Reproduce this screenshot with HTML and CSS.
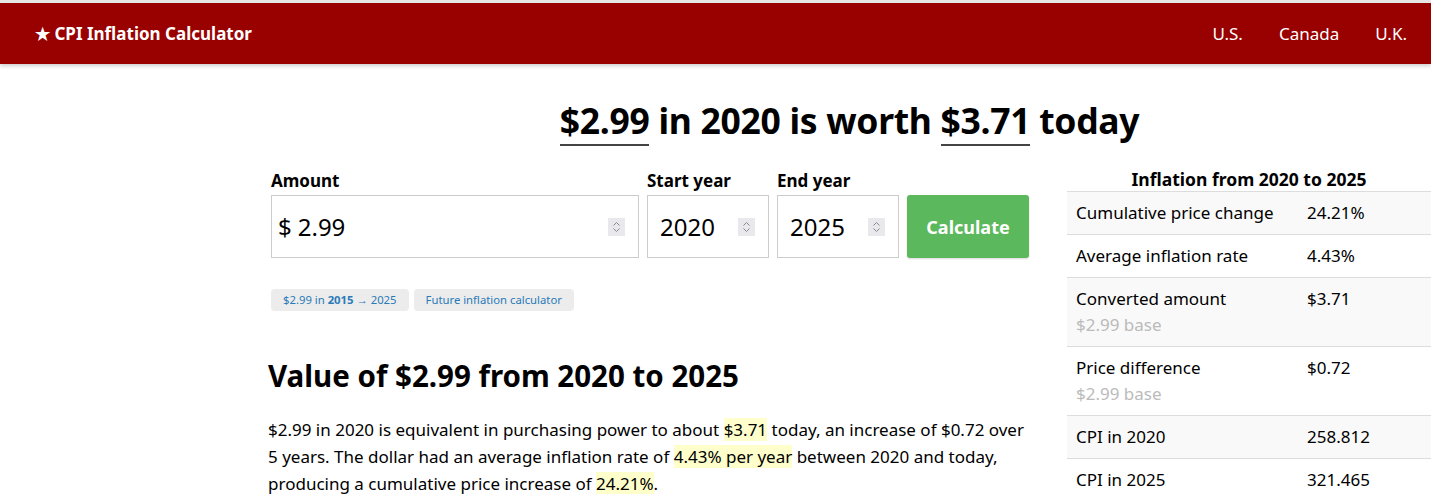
FILE: index.html
```html
<!DOCTYPE html>
<html lang="en">
<head>
    <meta charset="UTF-8">
    <meta name="viewport" content="width=device-width, initial-scale=1.0">
    <title>CPI Inflation Calculator</title>
    <link rel="stylesheet" href="styles.css">
</head>
<body>
    <header class="topbar">
        <a href="#" class="brand">★ CPI Inflation Calculator</a>
        <nav class="nav">
            <a href="#">U.S.</a>
            <a href="#">Canada</a>
            <a href="#">U.K.</a>
        </nav>
    </header>

    <main class="page">
        <h1 class="headline">
            <span class="amount-mark">$2.99</span> in 2020 is worth <span class="amount-mark">$3.71</span> today
        </h1>

        <div class="columns">
            <section class="main-col">
                <form class="calc-form">
                    <label class="field field-amount">
                        <span class="field-label">Amount</span>
                        <span class="field-box">
                            <span class="prefix">$</span>
                            <input class="field-input" type="text" value="2.99">
                            <span class="spinner">
                                <svg width="9" height="12" viewBox="0 0 9 12"><path d="M1.5 4.5 L4.5 1.5 L7.5 4.5 M1.5 7.5 L4.5 10.5 L7.5 7.5" fill="none" stroke="#8a8a8a" stroke-width="1"/></svg>
                            </span>
                        </span>
                    </label>
                    <label class="field field-year">
                        <span class="field-label">Start year</span>
                        <span class="field-box">
                            <input class="field-input" type="text" value="2020">
                            <span class="spinner">
                                <svg width="9" height="12" viewBox="0 0 9 12"><path d="M1.5 4.5 L4.5 1.5 L7.5 4.5 M1.5 7.5 L4.5 10.5 L7.5 7.5" fill="none" stroke="#8a8a8a" stroke-width="1"/></svg>
                            </span>
                        </span>
                    </label>
                    <label class="field field-year">
                        <span class="field-label">End year</span>
                        <span class="field-box">
                            <input class="field-input" type="text" value="2025">
                            <span class="spinner">
                                <svg width="9" height="12" viewBox="0 0 9 12"><path d="M1.5 4.5 L4.5 1.5 L7.5 4.5 M1.5 7.5 L4.5 10.5 L7.5 7.5" fill="none" stroke="#8a8a8a" stroke-width="1"/></svg>
                            </span>
                        </span>
                    </label>
                    <button type="button" class="calc-button">Calculate</button>
                </form>

                <div class="chips">
                    <a href="#" class="chip">$2.99 in <b>2015</b> → 2025</a>
                    <a href="#" class="chip">Future inflation calculator</a>
                </div>

                <h2 class="section-title">Value of $2.99 from 2020 to 2025</h2>
                <p class="summary">
                    $2.99 in 2020 is equivalent in purchasing power to about <mark>$3.71</mark> today, an increase of $0.72 over 5 years. The dollar had an average inflation rate of <mark>4.43% per year</mark> between 2020 and today, producing a cumulative price increase of <mark>24.21%</mark>.
                </p>
            </section>

            <aside class="side-col">
                <h3 class="side-title">Inflation from 2020 to 2025</h3>
                <table class="stats">
                    <tr>
                        <td>Cumulative price change</td>
                        <td>24.21%</td>
                    </tr>
                    <tr>
                        <td>Average inflation rate</td>
                        <td>4.43%</td>
                    </tr>
                    <tr>
                        <td>Converted amount<span class="sub">$2.99 base</span></td>
                        <td>$3.71</td>
                    </tr>
                    <tr>
                        <td>Price difference<span class="sub">$2.99 base</span></td>
                        <td>$0.72</td>
                    </tr>
                    <tr>
                        <td>CPI in 2020</td>
                        <td>258.812</td>
                    </tr>
                    <tr>
                        <td>CPI in 2025</td>
                        <td>321.465</td>
                    </tr>
                </table>
            </aside>
        </div>
    </main>
</body>
</html>
```

FILE: styles.css
```css
:root {
    --brand-red: #990000;
    --green: #5cb85c;
    --link-blue: #2a7ab8;
    --border-gray: #cccccc;
    --row-gray: #f9f9f9;
    --mark-yellow: #ffffcc;
}

* {
    box-sizing: border-box;
}

body {
    margin: 0;
    font-family: 'Noto Sans', 'Open Sans', sans-serif;
    color: #000;
    background: #fff;
    border-top: 3px solid #e6e6e6;
    overflow: hidden;
}

/* Barre du haut */
.topbar {
    display: flex;
    justify-content: space-between;
    align-items: center;
    height: 61px;
    padding: 0 24px 0 35px;
    background-color: var(--brand-red);
    box-shadow: 0 2px 4px rgba(0, 0, 0, 0.2);
}

.brand {
    color: #fff;
    font-size: 17px;
    font-weight: 700;
    text-decoration: none;
}

.nav {
    display: flex;
    gap: 36px;
}

.nav a {
    color: #fff;
    font-size: 17px;
    text-decoration: none;
}

/* Contenu */
.page {
    margin-left: 268px;
    padding-top: 33px;
}

.headline {
    margin: 0 0 27px;
    text-align: center;
    font-size: 35.5px;
    font-weight: 700;
    line-height: 46px;
    letter-spacing: -0.3px;
}

.amount-mark {
    border-bottom: 2px solid #444;
}

.columns {
    display: flex;
    gap: 37px;
}

.main-col {
    width: 762px;
    flex-shrink: 0;
}

.calc-form {
    display: flex;
    align-items: flex-end;
    gap: 8px;
    padding-left: 3px;
}

.field {
    display: flex;
    flex-direction: column;
}

.field-label {
    font-size: 17px;
    font-weight: 700;
    line-height: 22px;
    margin-bottom: 3px;
}

.field-box {
    display: flex;
    align-items: center;
    height: 63px;
    border: 1px solid var(--border-gray);
    padding: 0 13px 0 6px;
}

.field-amount .field-box {
    width: 368px;
}

.field-year .field-box {
    width: 122px;
    padding-left: 12px;
}

.prefix {
    font-size: 24px;
    margin-right: 6px;
}

.field-input {
    flex: 1;
    min-width: 0;
    border: none;
    outline: none;
    font-family: inherit;
    font-size: 24px;
    padding: 0;
    color: #000;
    background: transparent;
}

.spinner {
    display: flex;
    align-items: center;
    justify-content: center;
    width: 17px;
    height: 18px;
    background-color: #e9e9ed;
}

.calc-button {
    height: 63px;
    width: 122px;
    border: none;
    border-radius: 3px;
    background-color: var(--green);
    color: #fff;
    font-family: inherit;
    font-size: 18px;
    font-weight: 700;
    cursor: pointer;
    box-shadow: 0 1px 2px rgba(0, 0, 0, 0.15);
}

.chips {
    display: flex;
    gap: 5px;
    margin: 31px 0 0 3px;
}

.chip {
    background-color: #ececec;
    border-radius: 4px;
    padding: 3px 12px;
    font-size: 11.3px;
    line-height: 16px;
    color: var(--link-blue);
    text-decoration: none;
}

.section-title {
    margin: 45px 0 0;
    font-size: 29.5px;
    font-weight: 700;
    line-height: 40px;
}

.summary {
    margin: 20px 0 0;
    font-size: 17px;
    line-height: 27px;
}

.summary mark {
    background-color: var(--mark-yellow);
    color: inherit;
}

/* Colonne latérale */
.side-col {
    flex: 1;
}

.side-title {
    margin: -3px 0 0;
    text-align: center;
    font-size: 17.5px;
    font-weight: 700;
    line-height: 24px;
}

.stats {
    width: 100%;
    border-collapse: collapse;
    font-size: 17px;
}

.stats tr {
    border-top: 1px solid #dddddd;
}

.stats tr:nth-child(odd) {
    background-color: var(--row-gray);
}

.stats td {
    padding: 8px 9px;
    line-height: 26px;
    vertical-align: top;
}

.stats td:first-child {
    width: 231px;
}

.stats .sub {
    display: block;
    color: #bbbbbb;
}
```
